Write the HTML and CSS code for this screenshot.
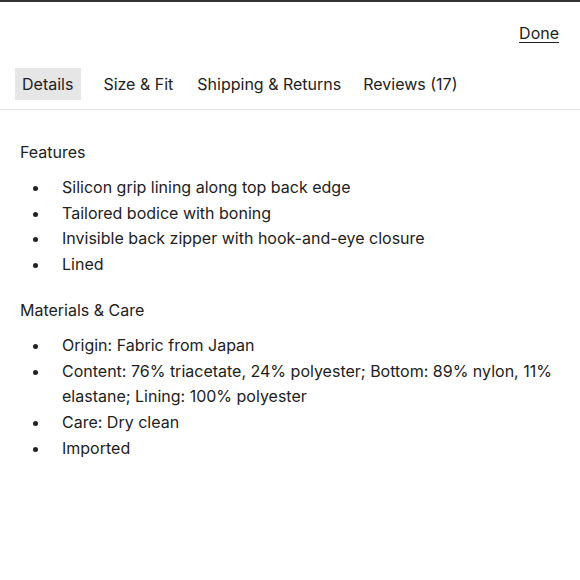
FILE: index.html
```html
<!DOCTYPE html>
<html>
<head>
<meta charset="utf-8">
<link rel="stylesheet" href="styles.css">
</head>
<body>
<div class="topbar"></div>
<header class="header">
  <a class="done" href="#">Done</a>
</header>
<nav class="tabs">
  <span class="tab active">Details</span>
  <span class="tab">Size &amp; Fit</span>
  <span class="tab">Shipping &amp; Returns</span>
  <span class="tab">Reviews (17)</span>
</nav>
<main class="content">
  <section class="section">
    <h2 class="heading">Features</h2>
    <ul class="list">
      <li>Silicon grip lining along top back edge</li>
      <li>Tailored bodice with boning</li>
      <li>Invisible back zipper with hook-and-eye closure</li>
      <li>Lined</li>
    </ul>
  </section>
  <section class="section">
    <h2 class="heading">Materials &amp; Care</h2>
    <ul class="list">
      <li>Origin: Fabric from Japan</li>
      <li>Content: 76% triacetate, 24% polyester; Bottom: 89% nylon, 11% elastane; Lining: 100% polyester</li>
      <li>Care: Dry clean</li>
      <li>Imported</li>
    </ul>
  </section>
</main>
</body>
</html>
```
FILE: styles.css
```css
* { box-sizing: border-box; }
html, body { margin: 0; padding: 0; background: #fff; }
body {
  font-family: "Inter", "Noto Sans", sans-serif;
  color: #222;
  font-size: 16px;
}
.topbar { height: 2px; background: #333; }
.header {
  display: flex;
  justify-content: flex-end;
  padding: 21px 21px 0 0;
  height: 50px;
}
.done {
  color: #222;
  font-size: 16px;
  text-decoration: underline;
  text-underline-offset: 3px;
}
.tabs {
  display: flex;
  gap: 22px;
  padding: 16px 0 0 15px;
  height: 58px;
  border-bottom: 1px solid #e4e4e4;
}
.tab {
  height: 32px;
  line-height: 32px;
}
.tab.active {
  background: #e6e6e6;
  padding: 0 8px 0 7px;
}
.tab:nth-child(3) { margin-left: 2px; }
.content { padding: 31px 20px 0 20px; }
.section { margin-bottom: 21px; }
.heading {
  margin: 0 0 12px;
  font-size: 16px;
  font-weight: normal;
  line-height: 22px;
}
.list {
  margin: 0;
  padding: 0;
  list-style: none;
}
.list li {
  position: relative;
  padding-left: 42px;
  line-height: 25.7px;
}
.list li::before {
  content: "";
  position: absolute;
  left: 13px;
  top: 11px;
  width: 5px;
  height: 5px;
  border-radius: 50%;
  background: #222;
}
```
